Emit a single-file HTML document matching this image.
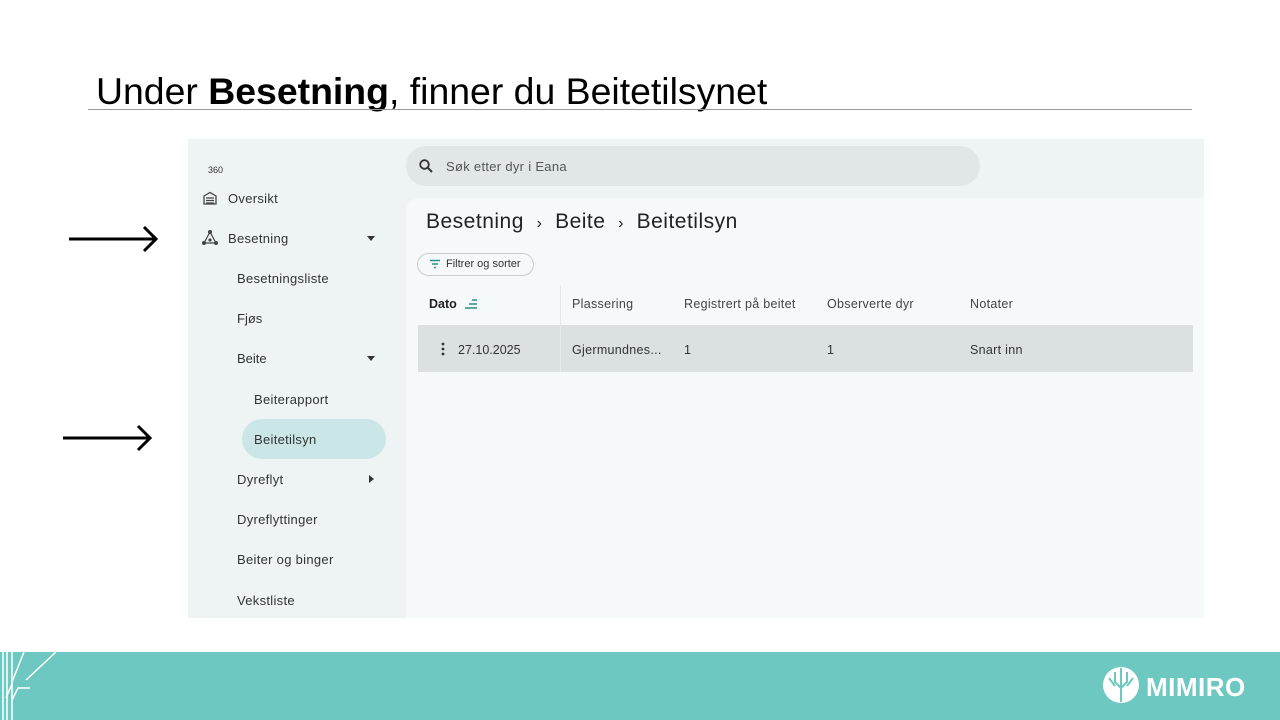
<!DOCTYPE html>
<html><head><meta charset="utf-8"><style>
*{margin:0;padding:0;box-sizing:border-box}
body{width:1280px;height:720px;background:#fff;font-family:"Liberation Sans",sans-serif;position:relative;overflow:hidden;color:#222}
.abs{position:absolute}
h1{position:absolute;left:96px;top:70px;font-size:37.4px;font-weight:normal;color:#000}
.rule{left:88px;top:109px;width:1104px;height:1px;background:#999}
.side{left:188px;top:139px;width:218px;height:479px;background:#eef3f3}
.main{left:406px;top:139px;width:798px;height:479px;background:#eef3f3}
.panel{left:406px;top:198px;width:798px;height:420px;background:#f5f9f9;border-radius:14px 0 0 0}
.search{left:406px;top:146px;width:574px;height:40px;border-radius:20px;background:#e1e7e6}
.s{font-size:13px;color:#333}
.nav{font-size:13px;color:#333;position:absolute}
.sel{left:242px;top:419px;width:144px;height:40px;border-radius:20px;background:#cbe6e6}
.row{left:418px;top:325px;width:775px;height:47px;background:#dbe1e0}
.th{font-size:12.5px;color:#444;position:absolute;top:297px}
.td{font-size:12.5px;color:#333;position:absolute;top:343px}
.foot{left:0;top:652px;width:1280px;height:68px;background:#6dc8c1}
</style></head><body>
<h1>Under <b>Besetning</b>, finner du Beitetilsynet</h1>
<div class="abs rule"></div>
<div class="abs side"></div>
<div class="abs main"></div>
<div class="abs panel"></div>
<div class="abs search"></div>
<svg class="abs" style="left:418px;top:158px" width="16" height="16" viewBox="0 0 16 16"><circle cx="6.5" cy="6.5" r="4.3" fill="none" stroke="#333" stroke-width="1.8"/><path d="M9.5 9.5L14 14" stroke="#333" stroke-width="2"/></svg>
<div class="abs s" style="left:446px;top:159px;color:#555;letter-spacing:0.3px">Søk etter dyr i Eana</div>
<div class="abs" style="left:208px;top:165px;font-size:9px;color:#333">360</div>
<svg class="abs" style="left:203px;top:191px" width="14" height="14" viewBox="0 0 14 14"><path d="M1 5L7 1.5L13 5V13H1Z M3 7H11 M3 9.5H11 M3 12H11" fill="none" stroke="#444" stroke-width="1.3"/></svg>
<div class="nav" style="left:228px;top:191px;letter-spacing:0.3px">Oversikt</div>
<svg class="abs" style="left:201px;top:229px" width="18" height="18" viewBox="0 0 18 18"><g fill="#444"><circle cx="9" cy="3" r="2"/><circle cx="3" cy="14" r="2"/><circle cx="15" cy="14" r="2"/><circle cx="9" cy="11" r="1.6"/></g><path d="M9 3L3 14L15 14Z" fill="none" stroke="#444" stroke-width="1.2"/></svg>
<div class="nav" style="left:228px;top:231px;letter-spacing:0.3px">Besetning</div>
<div class="abs" style="left:367px;top:236px;border:4px solid transparent;border-top:5px solid #333"></div>
<div class="nav" style="left:237px;top:271px;letter-spacing:0.3px">Besetningsliste</div>
<div class="nav" style="left:237px;top:311px">Fjøs</div>
<div class="nav" style="left:237px;top:351px">Beite</div>
<div class="abs" style="left:367px;top:356px;border:4px solid transparent;border-top:5px solid #333"></div>
<div class="nav" style="left:254px;top:392px;letter-spacing:0.3px">Beiterapport</div>
<div class="abs sel"></div>
<div class="nav" style="left:254px;top:432px;letter-spacing:0.3px">Beitetilsyn</div>
<div class="nav" style="left:237px;top:472px;letter-spacing:0.3px">Dyreflyt</div>
<div class="abs" style="left:369px;top:475px;border:4px solid transparent;border-left:5px solid #333"></div>
<div class="nav" style="left:237px;top:512px;letter-spacing:0.3px">Dyreflyttinger</div>
<div class="nav" style="left:237px;top:552px;letter-spacing:0.3px">Beiter og binger</div>
<div class="nav" style="left:237px;top:593px;letter-spacing:0.3px">Vekstliste</div>
<div class="abs" style="left:426px;top:210px;font-size:21px;color:#222;letter-spacing:0.5px">Besetning&nbsp;&nbsp;<span style="font-size:16px">›</span>&nbsp;&nbsp;Beite&nbsp;&nbsp;<span style="font-size:16px">›</span>&nbsp;&nbsp;Beitetilsyn</div>
<div class="abs" style="left:417px;top:253px;width:117px;height:23px;border:1px solid #c8cfce;border-radius:12px"></div>
<svg class="abs" style="left:429px;top:259px" width="12" height="10" viewBox="0 0 12 10"><path d="M1 1.5H11M3 5H9M5 8.5H7" stroke="#2a8f88" stroke-width="1.5"/></svg>
<div class="abs" style="left:446px;top:258px;font-size:11px;color:#333">Filtrer og sorter</div>
<div class="abs" style="left:560px;top:285px;width:1px;height:87px;background:#e2e8e7"></div>
<div class="th" style="left:429px;color:#222;font-weight:bold">Dato</div>
<svg class="abs" style="left:464px;top:298px" width="14" height="12" viewBox="0 0 14 12"><path d="M8 2H13M5 6H13M1 10H13" stroke="#2a8f88" stroke-width="1.5"/></svg>
<div class="th" style="left:572px;letter-spacing:0.3px">Plassering</div>
<div class="th" style="left:684px;letter-spacing:0.3px">Registrert på beitet</div>
<div class="th" style="left:827px;letter-spacing:0.3px">Observerte dyr</div>
<div class="th" style="left:970px;letter-spacing:0.3px">Notater</div>
<div class="abs row"></div>
<div class="abs" style="left:560px;top:325px;width:1px;height:47px;background:#e6ebea"></div>
<svg class="abs" style="left:440px;top:342px" width="6" height="14" viewBox="0 0 6 14"><g fill="#333"><circle cx="3" cy="2" r="1.4"/><circle cx="3" cy="7" r="1.4"/><circle cx="3" cy="12" r="1.4"/></g></svg>
<div class="td" style="left:458px">27.10.2025</div>
<div class="td" style="left:572px;letter-spacing:0.3px">Gjermundnes...</div>
<div class="td" style="left:684px">1</div>
<div class="td" style="left:827px">1</div>
<div class="td" style="left:970px;letter-spacing:0.3px">Snart inn</div>
<svg class="abs" style="left:60px;top:220px" width="100" height="240" viewBox="0 0 100 240"><g stroke="#000" stroke-width="3" fill="none"><path d="M9 19H95M84 7L96 19L84 31"/><path d="M3 218H89M78 206L90 218L78 230"/></g></svg>
<div class="abs foot"></div>
<svg class="abs" style="left:0;top:652px" width="60" height="68" viewBox="0 0 60 68"><g stroke="#fff" stroke-width="1.5" fill="none"><path d="M3 0V68M7 0V68"/><path d="M12 0V32L6 46"/><path d="M24 0L12 30V68"/><path d="M12 48L18 36H30"/><path d="M56 0L26 28"/></g></svg>
<svg class="abs" style="left:1101px;top:666px" width="40" height="38" viewBox="0 0 40 38"><ellipse cx="20" cy="19" rx="18" ry="18" fill="#fff"/><g stroke="#6dc8c1" stroke-width="2" fill="none"><path d="M20 2V36M14 6V16L20 22M26 6V16L20 22M8 12L14 20M32 12L26 20"/></g></svg>
<div class="abs" style="left:1146px;top:672px;font-size:26px;color:#fff;font-weight:bold;letter-spacing:0.5px">MIMIRO</div>
</body></html>
